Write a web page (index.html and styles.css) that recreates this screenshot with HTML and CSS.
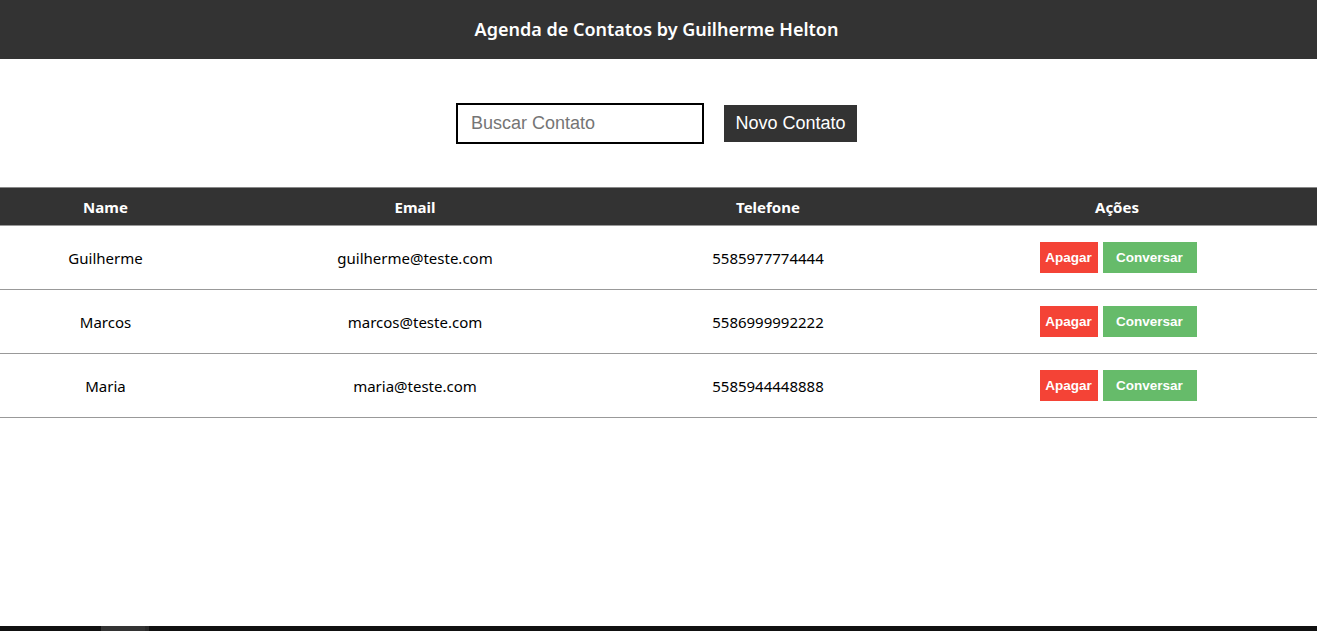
FILE: index.html
```html
<!DOCTYPE html>
<html lang="pt-BR">
<head>
<meta charset="utf-8">
<title>Agenda de Contatos</title>
<link rel="stylesheet" href="styles.css">
</head>
<body>
<header class="topbar">
  <h1 class="title">Agenda de Contatos by Guilherme Helton</h1>
</header>
<section class="search">
  <input class="search-input" type="text" placeholder="Buscar Contato">
  <button class="btn-new">Novo Contato</button>
</section>
<table class="contacts">
  <colgroup>
    <col class="c-name"><col class="c-email"><col class="c-phone"><col class="c-actions">
  </colgroup>
  <thead>
    <tr><th>Name</th><th>Email</th><th>Telefone</th><th>Ações</th></tr>
  </thead>
  <tbody>
    <tr>
      <td>Guilherme</td><td>guilherme@teste.com</td><td>5585977774444</td>
      <td><div class="actions"><button class="btn-del">Apagar</button><button class="btn-chat">Conversar</button></div></td>
    </tr>
    <tr>
      <td>Marcos</td><td>marcos@teste.com</td><td>5586999992222</td>
      <td><div class="actions"><button class="btn-del">Apagar</button><button class="btn-chat">Conversar</button></div></td>
    </tr>
    <tr>
      <td>Maria</td><td>maria@teste.com</td><td>5585944448888</td>
      <td><div class="actions"><button class="btn-del">Apagar</button><button class="btn-chat">Conversar</button></div></td>
    </tr>
  </tbody>
</table>
<div class="taskbar"><span class="tb-a"></span><span class="tb-b"></span></div>
</body>
</html>
```

FILE: styles.css
```css
html, body {
  margin: 0;
  padding: 0;
  background: #fff;
  font-family: "Noto Sans", "Open Sans", sans-serif;
}
.topbar {
  box-sizing: border-box;
  background: #333333;
  height: 59px;
  padding: 0 4px 2px 0;
  display: flex;
  align-items: center;
  justify-content: center;
}
.title {
  margin: 0;
  color: #fff;
  font-size: 18px;
  font-weight: 600;
}
.search {
  display: flex;
  justify-content: center;
  align-items: center;
  gap: 20px;
  padding: 44px 4px 43px 0;
}
.search-input {
  box-sizing: border-box;
  width: 248px;
  height: 41px;
  border: 2px solid #000;
  padding: 0 0 0 13px;
  font-family: "Liberation Sans", Arial, sans-serif;
  font-size: 18px;
  color: #333;
  outline: none;
}
.search-input::placeholder {
  color: #757575;
}
.btn-new {
  box-sizing: border-box;
  width: 133px;
  height: 37px;
  border: none;
  background: #333333;
  color: #fff;
  font-family: "Liberation Sans", Arial, sans-serif;
  font-size: 18px;
  padding: 0;
}
.contacts {
  width: 100%;
  border-collapse: collapse;
  table-layout: fixed;
}
.c-name { width: 211px; }
.c-email { width: 408px; }
.c-phone { width: 298px; }
.c-actions { width: auto; }
.contacts th {
  background: #333333;
  color: #fff;
  font-size: 15px;
  font-weight: 700;
  height: 37px;
  padding: 0;
  border-top: 1px solid #888;
  border-bottom: 1px solid #999;
  text-align: center;
}
.contacts td {
  height: 63px;
  padding: 0;
  text-align: center;
  font-size: 15px;
  color: #000;
  border-bottom: 1px solid #999;
}
.actions {
  display: flex;
  justify-content: center;
  gap: 5px;
  padding-left: 2px;
}
.btn-del, .btn-chat {
  border: none;
  height: 31px;
  padding: 0;
  color: #fff;
  font-family: "Liberation Sans", Arial, sans-serif;
  font-size: 13.5px;
  font-weight: 700;
}
.btn-del {
  width: 58px;
  background: #f44336;
}
.btn-chat {
  width: 94px;
  background: #66bb6a;
}
.taskbar {
  position: fixed;
  left: 0;
  right: 0;
  bottom: 0;
  height: 5px;
  background: #111;
  display: flex;
}
.tb-a {
  margin-left: 101px;
  width: 44px;
  background: #333;
}
.tb-b {
  width: 4px;
  background: #2a2a2a;
}
```
